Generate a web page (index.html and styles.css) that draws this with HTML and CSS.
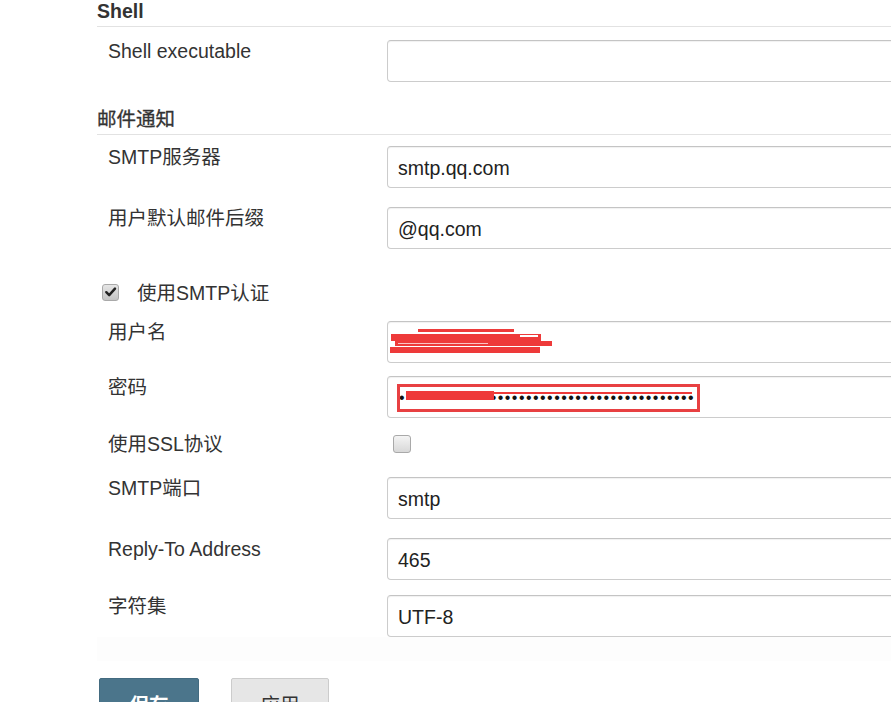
FILE: index.html
```html
<!DOCTYPE html>
<html lang="zh-CN">
<head>
<meta charset="utf-8">
<title>Jenkins 配置</title>
<link rel="stylesheet" href="styles.css">
</head>
<body>
<div class="page">
  <div class="section-head">Shell</div>
  <div class="row r-shell">
    <div class="lbl">Shell executable</div>
    <div class="field"><div class="input"></div></div>
  </div>

  <div class="section-head mail">邮件通知</div>
  <div class="row r-smtp">
    <div class="lbl">SMTP服务器</div>
    <div class="field"><div class="input">smtp.qq.com</div></div>
  </div>
  <div class="row r-gap19">
    <div class="lbl">用户默认邮件后缀</div>
    <div class="field"><div class="input">@qq.com</div></div>
  </div>

  <div class="check-row">
    <span class="cb checked"><svg viewBox="0 0 16 16" width="16" height="16"><path d="M3.5 8.2 L6.6 11.3 L12.8 4.4" fill="none" stroke="#222" stroke-width="2.6" stroke-linecap="round" stroke-linejoin="round"/></svg></span>
    <span class="check-label">使用SMTP认证</span>
  </div>

  <div class="row r-gap19">
    <div class="lbl">用户名</div>
    <div class="field"><div class="input redacted-user">
      <span class="rd u1"></span>
      <span class="rd u2"></span>
      <span class="rd u3"></span>
      <span class="rd u4"></span>
      <span class="wd w1"></span>
      <span class="wd w2"></span>
    </div></div>
  </div>
  <div class="row r-gap13">
    <div class="lbl">密码</div>
    <div class="field"><div class="input pw"><span class="dots">••••••••••••••••••••••••••••••••••••••••••</span>
      <span class="rd p1"></span>
      <span class="rd p2"></span>
      <span class="pw-box"></span>
    </div></div>
  </div>

  <div class="row r-ssl">
    <div class="lbl">使用SSL协议</div>
    <div class="field"><span class="cb ssl"></span></div>
  </div>

  <div class="row r-port">
    <div class="lbl">SMTP端口</div>
    <div class="field"><div class="input">smtp</div></div>
  </div>
  <div class="row r-gap19">
    <div class="lbl">Reply-To Address</div>
    <div class="field"><div class="input">465</div></div>
  </div>
  <div class="row r-gap14">
    <div class="lbl">字符集</div>
    <div class="field"><div class="input">UTF-8</div></div>
  </div>
  <div class="band"></div>

  <div class="buttons">
    <button class="btn primary">保存</button>
    <button class="btn secondary">应用</button>
  </div>
</div>
</body>
</html>
```

FILE: styles.css
```css
html, body {
  margin: 0;
  padding: 0;
  background: #ffffff;
  overflow: hidden;
}
body {
  font-family: "Liberation Sans", Arial, "Noto Sans CJK SC", sans-serif;
  font-size: 19.5px;
  color: #333333;
}
.page {
  padding-left: 97px;
  width: 1100px;
}
.section-head {
  font-weight: bold;
  font-size: 19.5px;
  line-height: 22px;
  height: 26px;
  border-bottom: 1px solid #e2e2e2;
  color: #333;
}
.section-head.mail {
  margin-top: 25px;
  font-weight: normal;
  -webkit-text-stroke: 0.3px #333;
  height: 27px;
  line-height: 24px;
}
.row {
  display: flex;
  align-items: flex-start;
}
.lbl {
  width: 279px;
  padding-left: 11px;
  line-height: 22px;
  padding-top: 0;
  color: #333;
}
.field {
  flex: 1;
}
.input {
  position: relative;
  box-sizing: border-box;
  width: 620px;
  height: 42px;
  border: 1px solid #cccccc;
  border-top-color: #c4c4c4;
  border-radius: 4px;
  box-shadow: inset 0 1px 1px rgba(0,0,0,0.06);
  padding-left: 10px;
  line-height: 43px;
  color: #222;
  background: #fff;
}
.r-shell { margin-top: 13px; }
.r-smtp { margin-top: 11px; }
.r-gap19 { margin-top: 19px; }
.r-gap13 { margin-top: 13px; }
.r-gap14 { margin-top: 15px; }
.r-port { margin-top: 24px; }

.check-row {
  display: flex;
  align-items: center;
  margin-top: 33px;
  height: 20px;
}
.cb {
  display: inline-flex;
  align-items: center;
  justify-content: center;
  box-sizing: border-box;
  width: 17px;
  height: 17px;
  border: 1px solid #a9a9a9;
  border-radius: 3px;
  background: linear-gradient(#f4f4f4, #d8d8d8);
}
.cb.checked {
  margin-left: 5px;
  background: linear-gradient(#e6e6e6, #c4c4c4);
}
.check-label {
  margin-left: 18px;
  line-height: 22px;
  padding-top: 2px;
  color: #333;
}
.r-ssl {
  margin-top: 15px;
  height: 20px;
}
.cb.ssl {
  margin-left: 6px;
  margin-top: 2px;
  width: 18px;
  height: 18px;
}

/* redaction marks drawn over the fields */
.rd {
  position: absolute;
  background: #ee3a3a;
}
.wd {
  position: absolute;
  background: #ffffff;
}
.u1 { left: 30px; top: 7px; width: 96px; height: 3px; }
.u2 { left: 3px; top: 12px; width: 150px; height: 7px; }
.u3 { left: 7px; top: 19px; width: 157px; height: 5px; }
.u4 { left: 2px; top: 25px; width: 150px; height: 6px; }
.w1 { left: 132px; top: 13px; width: 18px; height: 2px; }
.w2 { left: 10px; top: 21px; width: 90px; height: 1px; background: rgba(255,255,255,0.7); }

.pw .dots {
  position: absolute;
  left: 11px;
  top: 0;
  font-size: 16px;
  letter-spacing: 1.45px;
  color: #111;
  line-height: 42px;
}
.p1 { left: 18px; top: 14px; width: 88px; height: 9px; }
.p2 { left: 104px; top: 15px; width: 200px; height: 2px; }
.pw-box {
  position: absolute;
  left: 9px;
  top: 7px;
  width: 303px;
  height: 28px;
  box-sizing: border-box;
  border: 3px solid #e84042;
}

.band {
  margin-top: 0;
  height: 24px;
  background: #fdfdfd;
}
.buttons {
  display: flex;
  margin-top: 17px;
  gap: 32px;
  padding-left: 2px;
}
.btn {
  box-sizing: border-box;
  height: 44px;
  padding: 10px 0 0 0;
  font-family: "Liberation Sans", Arial, "Noto Sans CJK SC", sans-serif;
  font-size: 19.5px;
  line-height: 24px;
  border-radius: 2px 2px 0 0;
  vertical-align: top;
}
.btn.primary {
  width: 100px;
  background: #4b758b;
  border: 1px solid #436b80;
  color: #ffffff;
  font-weight: bold;
}
.btn.secondary {
  width: 98px;
  background: #e6e6e6;
  border: 1px solid #cccccc;
  color: #333333;
}
```
